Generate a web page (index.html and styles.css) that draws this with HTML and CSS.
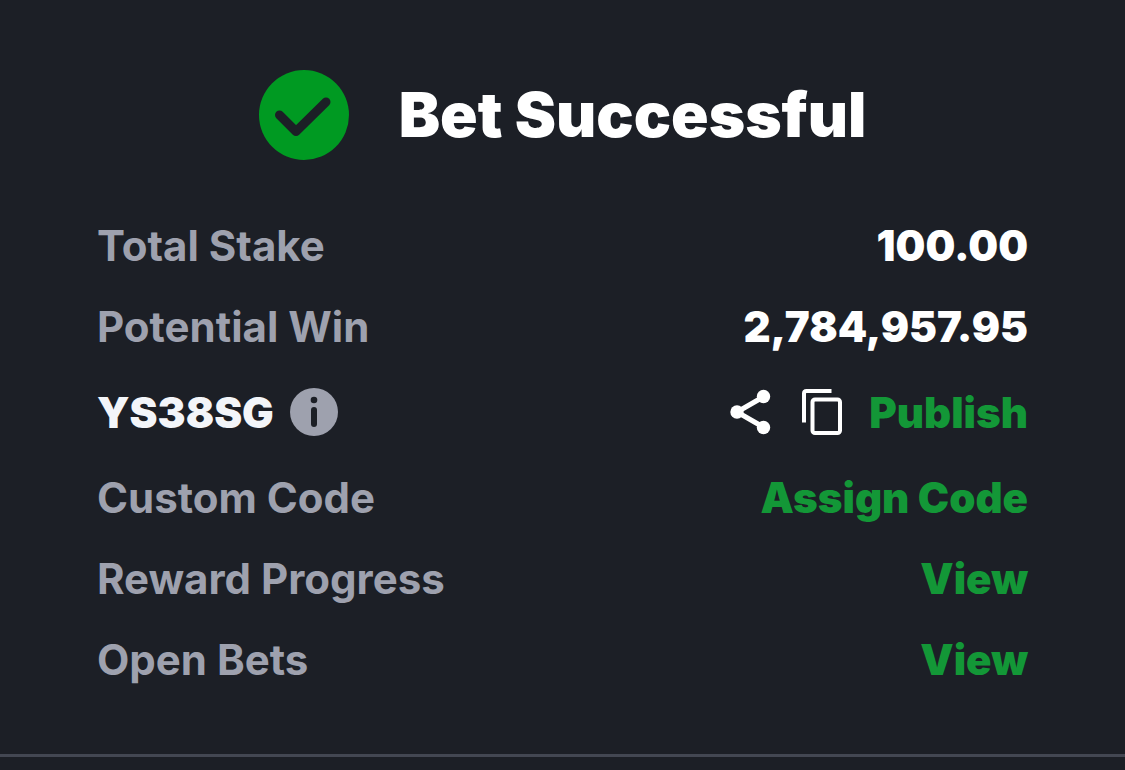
FILE: index.html
```
<!DOCTYPE html>
<html lang="en">
  <head>
    <meta charset="UTF-8" />
    <meta name="viewport" content="width=device-width, initial-scale=1.0" />
    <title>Bet Successful</title>
    <link rel="stylesheet" href="styles.css">
  </head>
  <body>
    <main class="receipt">
      <header class="receipt-header">
        <svg class="check" viewBox="0 0 90 90" aria-hidden="true">
          <circle cx="45" cy="45" r="45" />
          <path d="M20.500 45 L37 61.500 L67 32" />
        </svg>
        <h1>Bet Successful</h1>
      </header>

      <dl class="details">
        <div class="row">
          <dt>Total Stake</dt>
          <dd>100.00</dd>
        </div>
        <div class="row">
          <dt>Potential Win</dt>
          <dd>2,784,957.95</dd>
        </div>
        <div class="row code-row">
          <dt class="code">
            YS38SG
            <button type="button" class="info" aria-label="About this code">
              <svg viewBox="0 0 48 48">
                <circle class="disc" cx="24" cy="24" r="24" />
                <circle cx="24" cy="12" r="3.300" />
                <rect x="21" y="19" width="6" height="20" rx="3" />
              </svg>
            </button>
          </dt>
          <dd class="actions">
            <button type="button" class="share" aria-label="Share">
              <svg viewBox="0 0 40 46">
                <path d="M34 7.500 L7 23 L34 38.500" />
                <circle cx="33.500" cy="7.500" r="6.700" />
                <circle cx="7" cy="23" r="6.700" />
                <circle cx="33.500" cy="38.500" r="6.700" />
              </svg>
            </button>
            <button type="button" class="copy" aria-label="Copy code">
              <svg viewBox="0 0 40 46">
                <path d="M2 33.500 V4.500 Q2 2 4.500 2 H29.500" />
                <rect x="10.500" y="10.500" width="27.500" height="33.500" rx="2.500" />
              </svg>
            </button>
            <button type="button" class="action">Publish</button>
          </dd>
        </div>
        <div class="row">
          <dt>Custom Code</dt>
          <dd><button type="button" class="action">Assign Code</button></dd>
        </div>
        <div class="row">
          <dt>Reward Progress</dt>
          <dd><a href="#reward" class="action">View</a></dd>
        </div>
        <div class="row">
          <dt>Open Bets</dt>
          <dd><a href="#bets" class="action">View</a></dd>
        </div>
      </dl>
    </main>
  </body>
</html>
```
FILE: styles.css
```
* {
  box-sizing: border-box;
}
body {
  margin: 0;
  background-color: #1c1f26;
  color: #fff;
  font-family: Inter, sans-serif;
  font-size: 42px;
  line-height: 51px;
}
svg {
  display: block;
  width: 100%;
  height: 100%;
  overflow: visible;
}
button {
  background: none;
  border: 0;
  padding: 0;
  color: inherit;
  font: inherit;
  cursor: pointer;
}

.receipt {
  padding: 70px 97px 69px;
  border-bottom: 3px solid #434752;
}
.receipt-header {
  display: flex;
  align-items: center;
  justify-content: center;
  gap: 50px;
  margin-bottom: 60px;
}
.check {
  width: 90px;
  height: 90px;
  flex: none;
}
.check circle {
  fill: #009a22;
}
.check path {
  fill: none;
  stroke: #1c1f26;
  stroke-width: 9;
  stroke-linecap: round;
  stroke-linejoin: round;
}
h1 {
  margin: 0;
  font-size: 62px;
  font-weight: 900;
  line-height: 90px;
}

.details {
  display: flex;
  flex-direction: column;
  gap: 30px;
  margin: 0;
}
.row {
  display: flex;
  align-items: center;
  justify-content: space-between;
}
.code-row {
  min-height: 60px;
}
dt {
  color: #9ea1ae;
  font-weight: 700;
}
dd {
  margin: 0;
  font-weight: 900;
}
.code {
  display: flex;
  align-items: center;
  gap: 16px;
  color: #f3f5f9;
  font-weight: 900;
}
.actions {
  display: flex;
  align-items: center;
}
.action {
  color: #139737;
  font-weight: 900;
  text-decoration: none;
}

/* icons */
.info {
  width: 48px;
  height: 48px;
  fill: #1c1f26;
}
.info .disc {
  fill: #9ea1ae;
}
.share,
.copy {
  width: 40px;
  height: 46px;
}
.share {
  margin-right: 32px;
  fill: #fff;
}
.share path {
  fill: none;
  stroke: #fff;
  stroke-width: 5;
}
.copy {
  margin-right: 27px;
  fill: none;
  stroke: #fff;
  stroke-width: 4;
}
```
